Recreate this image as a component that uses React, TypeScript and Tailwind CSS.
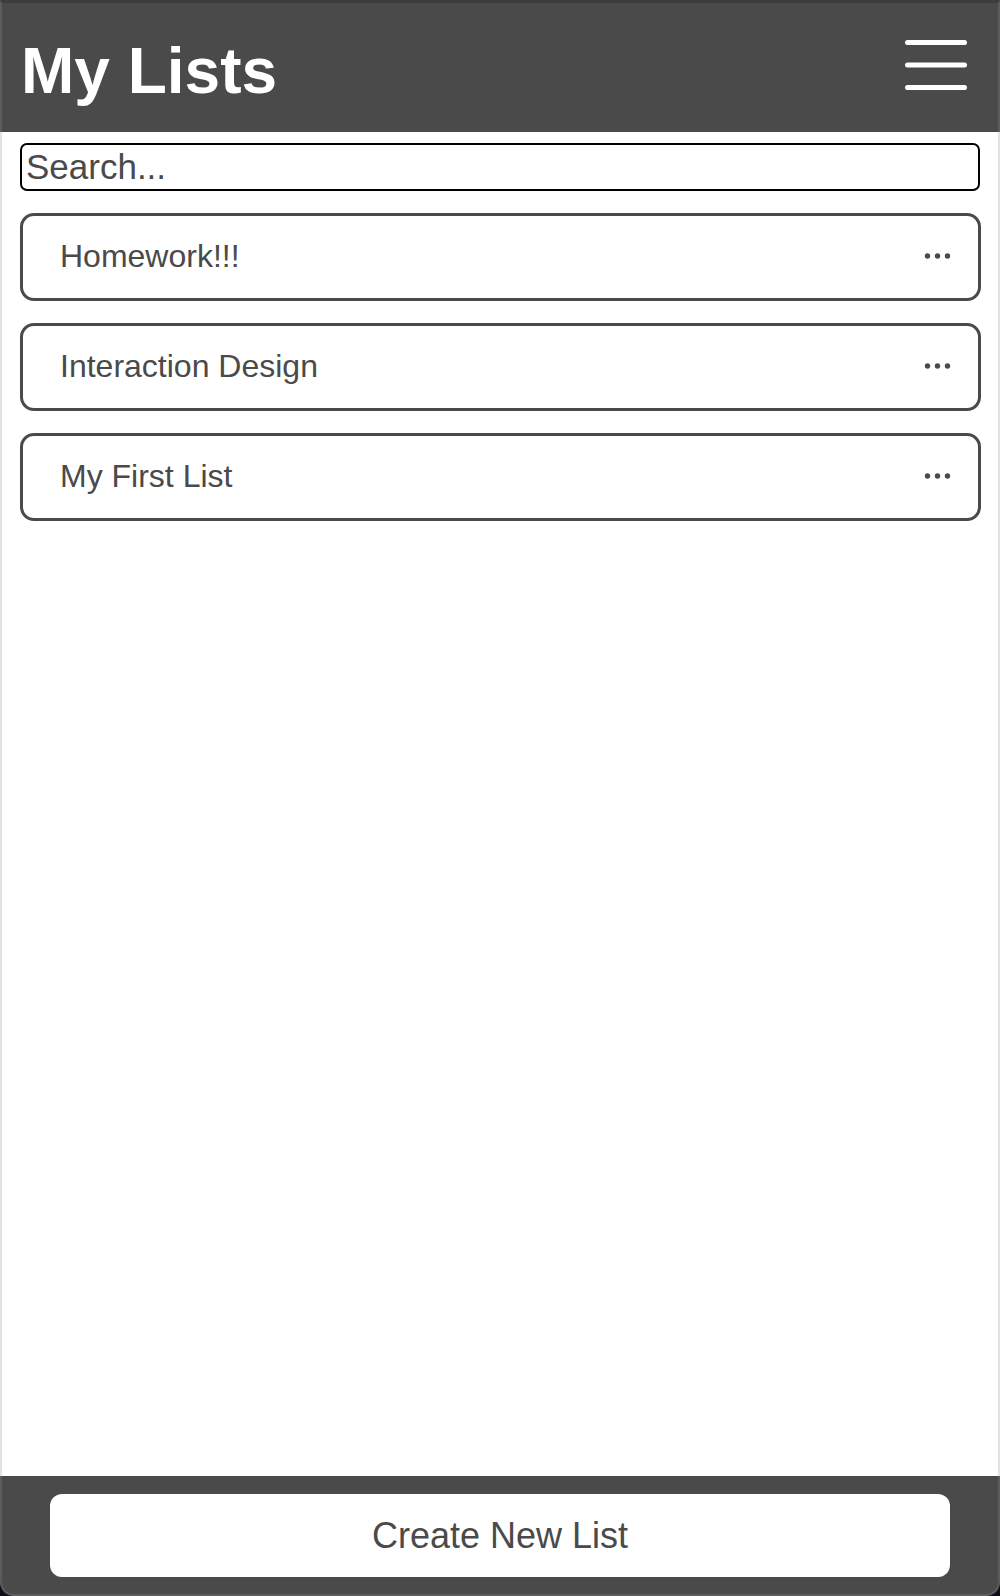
import React from 'react'

const lists = ['Homework!!!', 'Interaction Design', 'My First List']

function Dots() {
  return (
    <svg width="28" height="8" viewBox="0 0 28 8" className="fill-[#4a4a4a]">
      <circle cx="3.5" cy="4" r="2.7" />
      <circle cx="13.5" cy="4" r="2.7" />
      <circle cx="23.5" cy="4" r="2.7" />
    </svg>
  )
}

export default function App() {
  return (
    <div className="flex h-[1596px] w-[1000px] flex-col bg-[#0f0f1c] font-['Liberation_Sans',Arial,sans-serif]">
      {/* Header */}
      <header className="flex h-[132px] shrink-0 items-center justify-between border-x-2 border-t-[3px] border-x-[#5c5c5c] border-t-[#3c3c3c] bg-[#4a4a4a] pl-[19px] pr-[31px]">
        <h1 className="mt-[7px] text-[64px] leading-none font-bold text-white">My Lists</h1>
        <svg width="62" height="50" viewBox="0 0 62 50" className="mb-[5px] stroke-white" strokeWidth="5" strokeLinecap="round">
          <line x1="2.5" y1="2.5" x2="59.5" y2="2.5" />
          <line x1="2.5" y1="25" x2="59.5" y2="25" />
          <line x1="2.5" y1="47.5" x2="59.5" y2="47.5" />
        </svg>
      </header>

      {/* Search + lists */}
      <div className="flex flex-1 flex-col border-x-2 border-[#e2e2e2] bg-white px-[18px] pt-[11px]">
        <input
          placeholder="Search..."
          className="h-[48px] w-[960px] rounded-[7px] border-2 border-black px-[4px] text-[35px] text-[#333] outline-none placeholder:text-[#4a4a4a]"
        />
        <div className="mt-[22px] flex flex-col gap-[22px]">
          {lists.map(name => (
            <div key={name} className="flex h-[88px] w-[961px] items-center justify-between rounded-[14px] border-[3px] border-[#4a4a4a] pb-[2px] pl-[37px] pr-[26px]">
              <span className="text-[32px] text-[#4a4a4a]">{name}</span>
              <Dots />
            </div>
          ))}
        </div>
      </div>

      {/* Footer */}
      <footer className="h-[120px] shrink-0 rounded-b-[14px] border-x-2 border-b-2 border-[#5c5c5c] bg-[#4a4a4a] px-[48px] pt-[18px]">
        <button className="flex h-[83px] w-full items-center justify-center rounded-[12px] bg-white text-[36px] text-[#4a4a4a]">
          Create New List
        </button>
      </footer>
    </div>
  )
}
